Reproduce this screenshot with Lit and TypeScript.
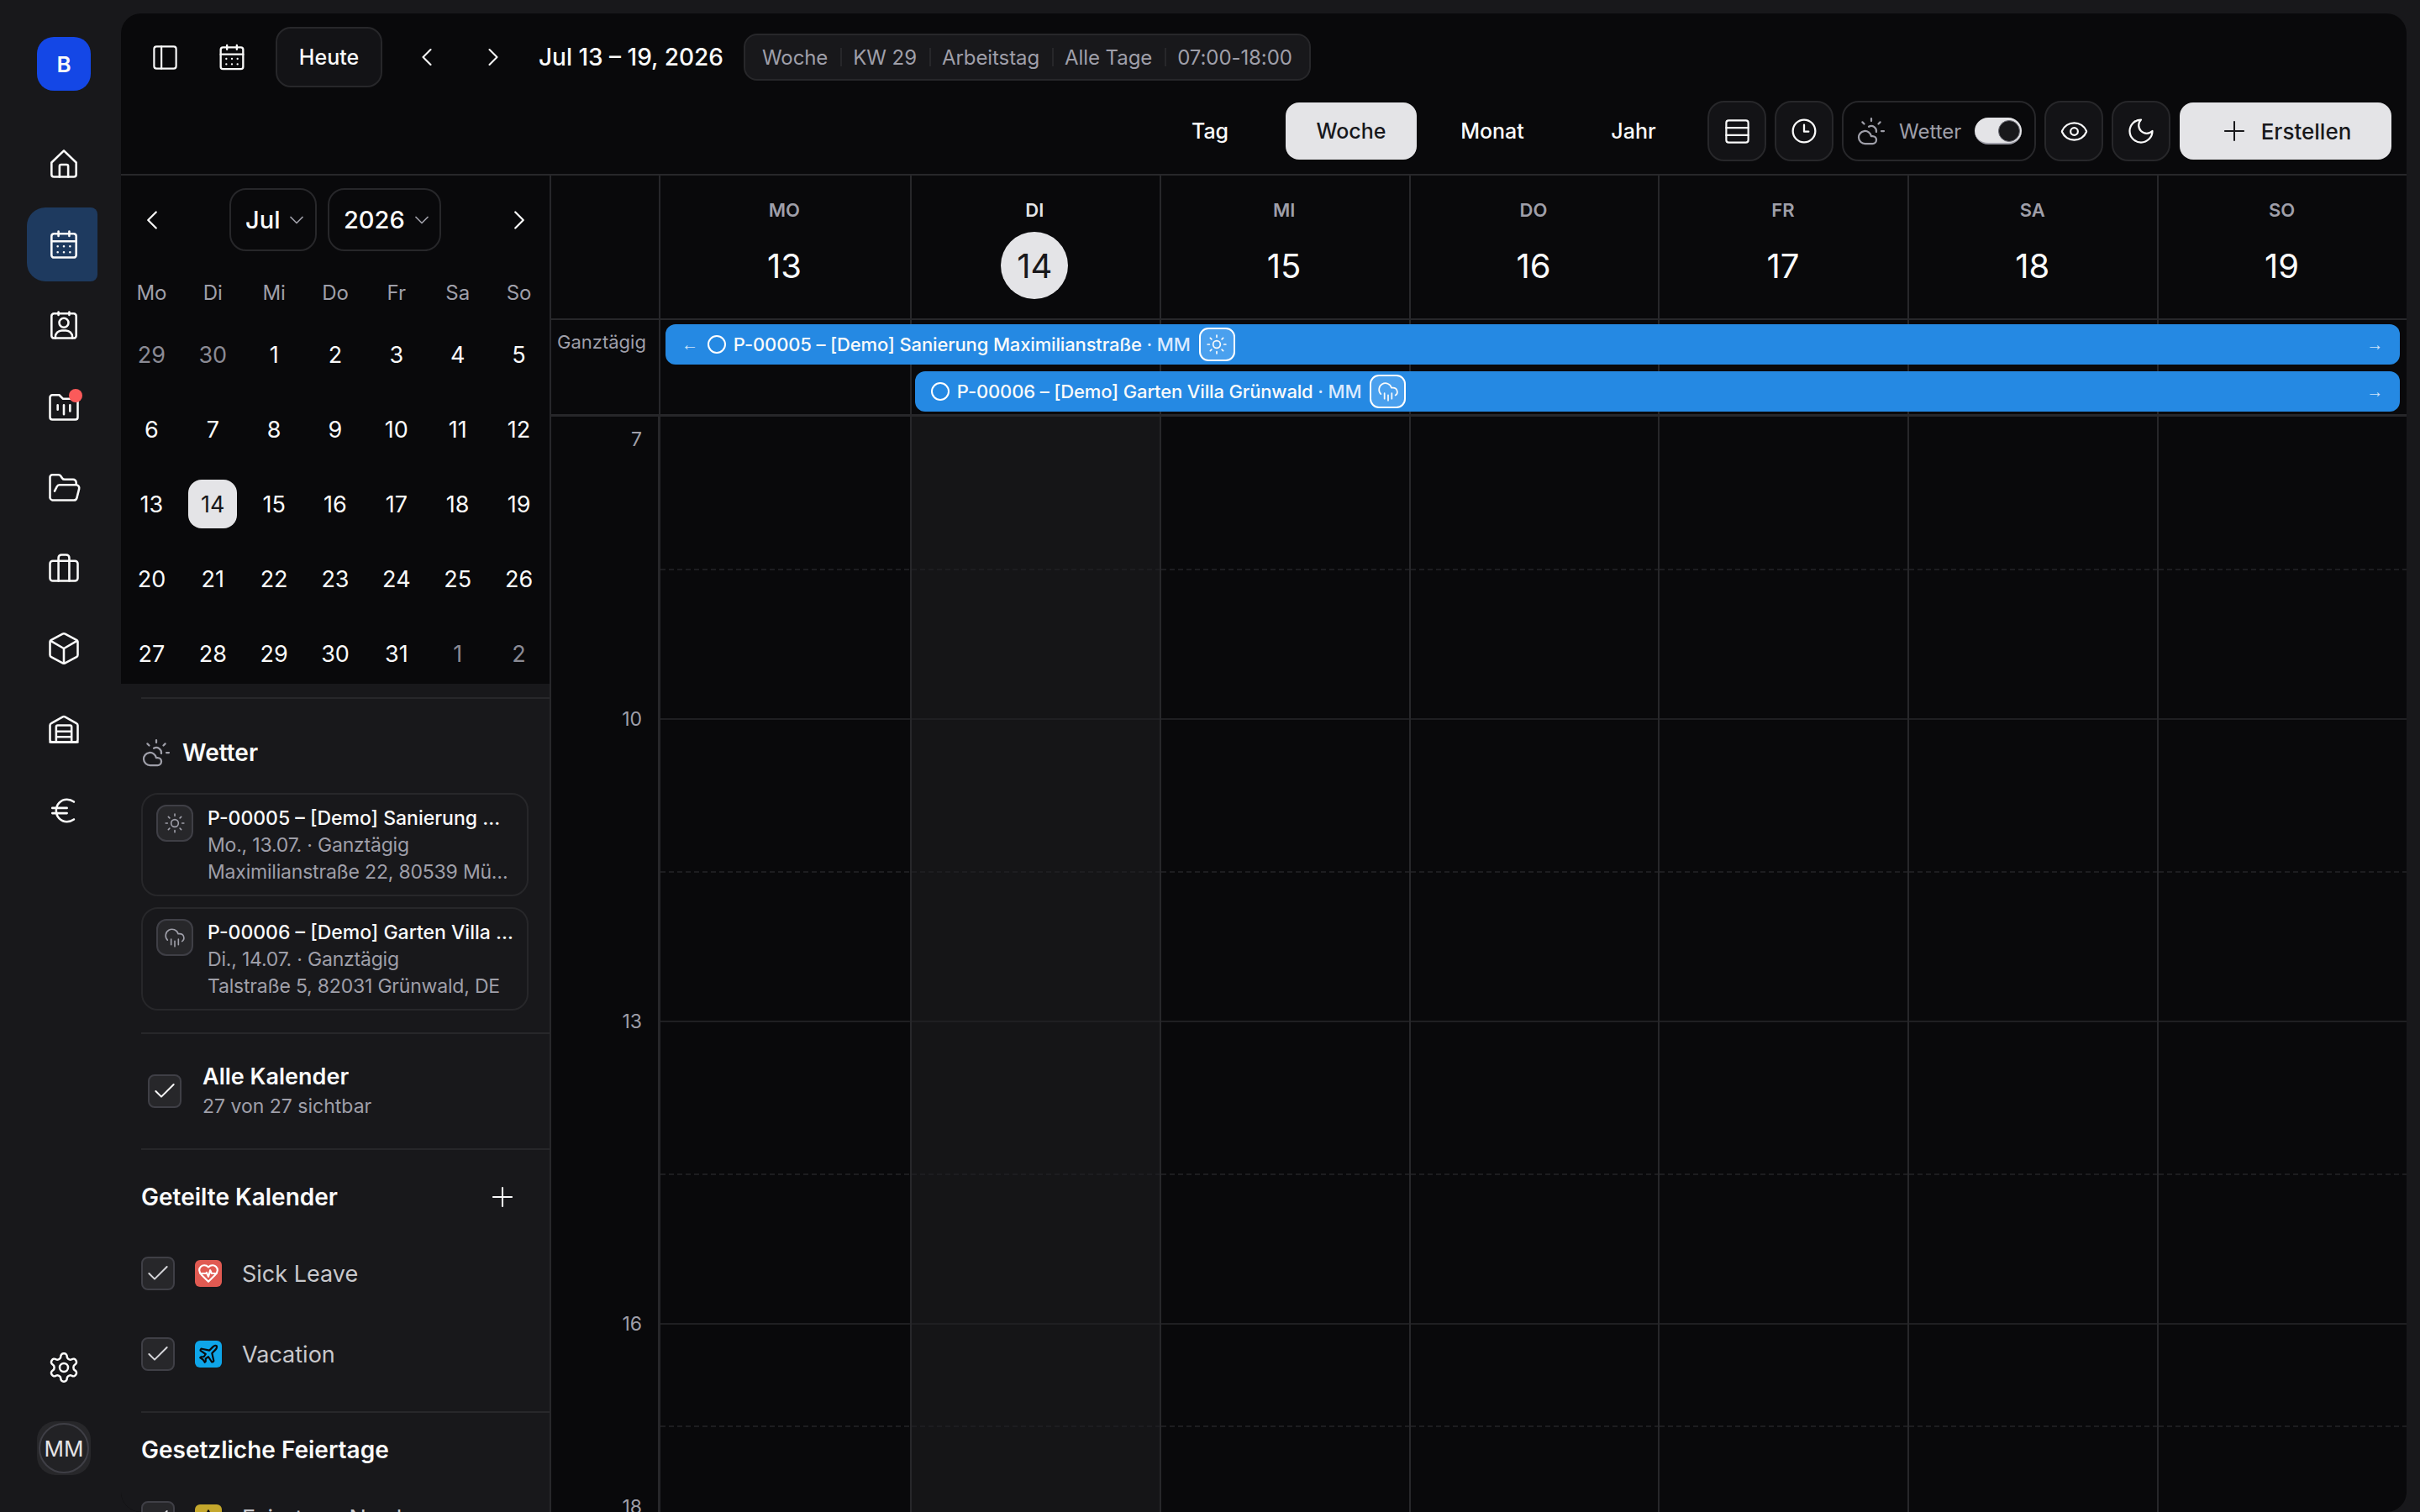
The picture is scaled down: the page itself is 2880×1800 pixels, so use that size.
import { LitElement, html, css, svg } from "lit";
import { customElement } from "lit/decorators.js";

const ICONS: Record<string, unknown> = {
  home: svg`<path d="M4 11.2 12 3.5l8 7.7V19a1.5 1.5 0 0 1-1.5 1.5h-13A1.5 1.5 0 0 1 4 19Z"/><path d="M9.2 20.5V13.5a1 1 0 0 1 1-1h3.6a1 1 0 0 1 1 1v7"/>`,
  calendar: svg`<rect x="4" y="5" width="16" height="15.5" rx="1.6"/><path d="M4 10h16M8.5 3.500v3M15.5 3.500v3"/><path d="M8 13.2h.01M12 13.2h.01M16 13.2h.01M8 17h.01M12 17h.01M16 17h.01"/>`,
  contact: svg`<rect x="4" y="4.5" width="16" height="16" rx="1.6"/><path d="M8.5 3.500v2M15.5 3.500v2"/><circle cx="12" cy="10.5" r="3"/><path d="M6.5 20.5v-.8a4.2 4.2 0 0 1 4.2-4.2h2.6a4.2 4.2 0 0 1 4.2 4.2v.8"/>`,
  report: svg`<path d="M3 6a1.5 1.5 0 0 1 1.5-1.5H9l2.5 2.5h8A1.5 1.5 0 0 1 21 8.500V19a1.500 1.500 0 0 1-1.500 1.500h-15A1.500 1.500 0 0 1 3 19Z"/><path d="M8 11v3M12 11v6M16 11v4"/>`,
  folder: svg`<path d="M6 14.500 7.500 11.600A2 2 0 0 1 9.200 10.500H20a2 2 0 0 1 1.900 2.500l-1.500 6a2 2 0 0 1-1.900 1.500H4.500A2 2 0 0 1 3 19V5.500A1.500 1.500 0 0 1 4.500 4h3.900a2 2 0 0 1 1.700.900l.800 1.200a2 2 0 0 0 1.700.900H18a2 2 0 0 1 2 2v1.500"/>`,
  briefcase: svg`<rect x="3" y="7.500" width="18" height="13" rx="1.800"/><path d="M8.500 7.500V20.500M15.500 7.500V20.500M8.500 7.500V5.500a2 2 0 0 1 2-2h3a2 2 0 0 1 2 2v2"/>`,
  box: svg`<path d="M21 16.200V7.800a1.500 1.500 0 0 0-.8-1.300l-7.400-4a1.700 1.700 0 0 0-1.600 0l-7.400 4a1.500 1.500 0 0 0-.8 1.300v8.400a1.500 1.500 0 0 0 .8 1.300l7.400 4a1.700 1.700 0 0 0 1.600 0l7.400-4a1.500 1.500 0 0 0 .8-1.300Z"/><path d="M3.400 7 12 12l8.600-5M12 12v9.500"/>`,
  warehouse: svg`<path d="M3 9.500a1.500 1.500 0 0 1 .8-1.300l7.500-4.200a1.500 1.500 0 0 1 1.400 0l7.500 4.200a1.500 1.500 0 0 1 .8 1.300V19a1.500 1.500 0 0 1-1.500 1.500h-15A1.500 1.500 0 0 1 3 19Z"/><path d="M7 20.500V10.500a1 1 0 0 1 1-1h8a1 1 0 0 1 1 1v10M7 13.500h10M7 17h10M3 20.500h18"/>`,
  euro: svg`<path d="M18.500 6.300a8 8 0 0 0-4.500-1.500c-4 0-7 3.200-7 7.200s3 7.200 7 7.200a8 8 0 0 0 4.500-1.500M4.500 10.300h9.500M4.500 13.700h9.500"/>`,
  settings: svg`<path d="M12.220 2h-.44a2 2 0 0 0-2 2v.18a2 2 0 0 1-1 1.730l-.43.250a2 2 0 0 1-2 0l-.15-.08a2 2 0 0 0-2.730.730l-.22.380a2 2 0 0 0 .730 2.730l.15.100a2 2 0 0 1 1 1.720v.510a2 2 0 0 1-1 1.740l-.15.090a2 2 0 0 0-.730 2.730l.22.380a2 2 0 0 0 2.730.730l.15-.08a2 2 0 0 1 2 0l.43.250a2 2 0 0 1 1 1.730V20a2 2 0 0 0 2 2h.44a2 2 0 0 0 2-2v-.18a2 2 0 0 1 1-1.730l.43-.250a2 2 0 0 1 2 0l.15.08a2 2 0 0 0 2.730-.730l.22-.390a2 2 0 0 0-.730-2.730l-.15-.08a2 2 0 0 1-1-1.740v-.5a2 2 0 0 1 1-1.740l.15-.090a2 2 0 0 0 .730-2.730l-.22-.380a2 2 0 0 0-2.730-.730l-.15.08a2 2 0 0 1-2 0l-.43-.250a2 2 0 0 1-1-1.730V4a2 2 0 0 0-2-2z"/><circle cx="12" cy="12" r="3"/>`,
  panel: svg`<rect x="3" y="3" width="18" height="18" rx="2"/><path d="M9 3v18"/>`,
  left: svg`<path d="m15 18-6-6 6-6"/>`,
  right: svg`<path d="m9 18 6-6-6-6"/>`,
  down: svg`<path d="m6 9 6 6 6-6"/>`,
  plus: svg`<path d="M5 12h14M12 5v14"/>`,
  check: svg`<path d="M20 6 9 17l-5-5"/>`,
  rows: svg`<rect x="3" y="3" width="18" height="18" rx="2"/><path d="M3 9h18M3 15h18"/>`,
  clock: svg`<circle cx="12" cy="12" r="10"/><path d="M12 6.500V12.500h4"/>`,
  eye: svg`<path d="M2.062 12.348a1 1 0 0 1 0-.696 10.750 10.750 0 0 1 19.876 0 1 1 0 0 1 0 .696 10.750 10.750 0 0 1-19.876 0"/><circle cx="12" cy="12" r="3"/>`,
  moon: svg`<path d="M12 3a6 6 0 0 0 9 9 9 9 0 1 1-9-9Z"/>`,
  cloudSun: svg`<path d="M12 2v2M4.930 4.930l1.410 1.410M20 12h2M19.070 4.930l-1.410 1.410M15.947 12.650a4 4 0 0 0-5.925-4.128M13 22H7a5 5 0 1 1 4.900-6H13a3 3 0 0 1 0 6Z"/>`,
  sun: svg`<circle cx="12" cy="12" r="4"/><path d="M12 2v2M12 20v2M4.930 4.930l1.410 1.410M17.660 17.660l1.410 1.410M2 12h2M20 12h2M6.340 17.660l-1.410 1.410M19.070 4.930l-1.410 1.410"/>`,
  rain: svg`<path d="M4 14.899A7 7 0 1 1 15.710 8h1.790a4.500 4.500 0 0 1 2.500 8.242M16 14v6M8 14v6M12 16v6"/>`,
  heart: svg`<path d="M19 14c1.490-1.460 3-3.210 3-5.500A5.500 5.500 0 0 0 16.500 3c-1.760 0-3 .5-4.500 2-1.500-1.500-2.740-2-4.500-2A5.500 5.500 0 0 0 2 8.500c0 2.300 1.500 4.050 3 5.500l7 7Z"/><path d="M3.220 12H9.500l.5-1 2 4.500 2-7 1.500 3.500h5.270"/>`,
  plane: svg`<path d="M17.800 19.200 16 11l3.500-3.500C21 6 21.500 4 21 3c-1-.5-3 0-4.500 1.500L13 8 4.800 6.200c-.5-.1-.9.1-1.100.5l-.3.5c-.2.5-.1 1 .3 1.300L9 12l-2 3H4l-1 1 3 2 2 3 1-1v-3l3-2 3.500 5.300c.3.4.8.5 1.300.3l.5-.2c.4-.3.6-.7.5-1.200z"/>`,
  peak: svg`<path d="M12 4 5 20h14Z"/>`,
};

const icon = (name: string, size: number, stroke = 2) => html`<svg
  class="icon"
  width=${size}
  height=${size}
  viewBox="0 0 24 24"
  fill="none"
  stroke="currentColor"
  stroke-width=${stroke}
  stroke-linecap="round"
  stroke-linejoin="round"
>${ICONS[name]}</svg>`;

const NAV = ["home", "calendar", "contact", "report", "folder", "briefcase", "box", "warehouse", "euro"];
const WEEK = [
  ["MO", "13"],
  ["DI", "14"],
  ["MI", "15"],
  ["DO", "16"],
  ["FR", "17"],
  ["SA", "18"],
  ["SO", "19"],
];
const MINI_HEAD = ["Mo", "Di", "Mi", "Do", "Fr", "Sa", "So"];
const MINI_DAYS = [29, 30, ...Array.from({ length: 31 }, (_, i) => i + 1), 1, 2];
// half hour blocks of the grid, the last visible block is shorter
const SLOTS = [
  [183, 178],
  [182, 178],
  [182, 178],
  [122, 118],
];
const HOURS = [
  ["7", 12],
  ["10", 303],
  ["13", 330],
  ["16", 330],
  ["18", 188],
];
const FILTERS = ["Woche", "KW 29", "Arbeitstag", "Alle Tage", "07:00-18:00"];

@customElement("app-root")
export class AppRoot extends LitElement {
  static styles = css`
    :host {
      display: flex;
      height: 100vh;
      overflow: hidden;
      background: #18181b;
      color: #fafafa;
      font-family: Inter, "Liberation Sans", sans-serif;
      font-size: 24px;
    }
    .icon {
      display: block;
      flex: none;
    }

    /* rail */
    .rail {
      width: 144px;
      flex: none;
      display: flex;
      flex-direction: column;
      padding: 44px 0;
      box-sizing: border-box;
    }
    .logo {
      width: 64px;
      height: 64px;
      margin-left: 44px;
      border-radius: 20px;
      background: #1447e6;
      display: flex;
      align-items: center;
      justify-content: center;
      font-size: 26px;
      font-weight: 600;
    }
    .nav {
      margin-top: 43px;
      display: flex;
      flex-direction: column;
      gap: 8.2px;
    }
    .nav-item {
      position: relative;
      width: 80px;
      height: 88px;
      margin-left: 32px;
      padding-left: 4px;
      display: flex;
      align-items: center;
      justify-content: center;
      border-radius: 22px 8px 8px 22px;
    }
    .nav-item.active {
      background: #1e3a5f;
    }
    .dot {
      position: absolute;
      left: 50px;
      top: 23px;
      width: 16px;
      height: 16px;
      border-radius: 50%;
      background: #fb5a5a;
    }
    .rail-foot {
      margin-top: auto;
      padding-left: 8px;
      display: flex;
      flex-direction: column;
      align-items: center;
      gap: 44px;
    }
    .avatar {
      width: 64px;
      height: 64px;
      box-sizing: border-box;
      border-radius: 22px;
      background: #27272a;
      padding: 2px;
      color: #e4e4e7;
      font-size: 26px;
    }
    .avatar div {
      height: 100%;
      box-sizing: border-box;
      border: 2px solid #3f3f46;
      border-radius: 50%;
      background: #222225;
      display: flex;
      align-items: center;
      justify-content: center;
    }

    /* panel */
    .panel {
      flex: 1;
      min-width: 0;
      margin: 16px 16px 0 0;
      border-radius: 24px;
      background: #09090b;
      overflow: hidden;
      display: flex;
      flex-direction: column;
    }
    .toolbar {
      height: 193px;
      flex: none;
      box-sizing: border-box;
      border-bottom: 2px solid #27272a;
      padding: 16px 18px 0 16px;
      display: flex;
      flex-direction: column;
      gap: 16px;
    }
    .bar-top,
    .bar-bottom {
      display: flex;
      align-items: center;
    }
    .bar-bottom {
      justify-content: flex-end;
      gap: 10px;
      height: 72px;
    }
    .plain {
      width: 72px;
      height: 72px;
      display: flex;
      align-items: center;
      justify-content: center;
    }
    .today-btn {
      margin-left: 16px;
      width: 127px;
      height: 72px;
      box-sizing: border-box;
      border: 2px solid #27272a;
      border-radius: 18px;
      background: #131316;
      display: flex;
      align-items: center;
      justify-content: center;
      font-size: 25px;
      font-weight: 500;
    }
    .range {
      margin-left: 18px;
      font-size: 28px;
      font-weight: 500;
      white-space: nowrap;
    }
    .filters {
      margin-left: 24px;
      height: 56px;
      box-sizing: border-box;
      border: 2px solid #27272a;
      border-radius: 16px;
      background: #18181b;
      padding: 0 20px;
      display: flex;
      align-items: center;
      color: #9f9fa9;
      white-space: nowrap;
      letter-spacing: -0.08px;
    }
    .filters span + span {
      margin-left: 15px;
      padding-left: 15px;
      background: linear-gradient(#27272a, #27272a) left center / 2px 22px no-repeat;
    }
    .tab {
      width: 156px;
      height: 68px;
      border-radius: 16px;
      display: flex;
      align-items: center;
      justify-content: center;
      font-size: 25px;
      font-weight: 500;
    }
    .tab.active {
      background: #e4e4e7;
      color: #18181b;
    }
    .tabs {
      display: flex;
      gap: 12px;
    }
    .tool {
      width: 70px;
      height: 72px;
      box-sizing: border-box;
      border: 2px solid #27272a;
      border-radius: 20px;
      background: #131316;
      display: flex;
      align-items: center;
      justify-content: center;
    }
    .weather-tool {
      width: 231px;
      height: 72px;
      box-sizing: border-box;
      border: 2px solid #27272a;
      border-radius: 20px;
      background: #09090b;
      padding: 0 15px 0 15px;
      display: flex;
      align-items: center;
      color: #9f9fa9;
    }
    .weather-tool span {
      margin-left: 15px;
    }
    .toggle {
      margin-left: auto;
      width: 56px;
      height: 32px;
      box-sizing: border-box;
      border-radius: 16px;
      background: #e4e4e7;
      border-bottom: 2px solid #9f9fa9;
      padding: 3px 2px 0 0;
      display: flex;
      justify-content: flex-end;
    }
    .toggle i {
      width: 26px;
      height: 26px;
      box-sizing: border-box;
      border-radius: 50%;
      border: 1px solid #71717a;
      background: #18181b;
    }
    .create {
      width: 252px;
      height: 68px;
      margin-left: 1px;
      box-sizing: border-box;
      padding-right: 2px;
      border-radius: 16px;
      background: #e4e4e7;
      color: #18181b;
      display: flex;
      align-items: center;
      justify-content: center;
      gap: 13px;
      font-size: 26px;
      font-weight: 500;
    }

    .body {
      flex: 1;
      min-height: 0;
      display: flex;
    }

    /* left column */
    .side {
      width: 512px;
      flex: none;
      box-sizing: border-box;
      border-right: 2px solid #27272a;
      background: #18181b;
      overflow: hidden;
    }
    .mini {
      background: #09090b;
      padding: 15px 0 7px;
    }
    .mini-nav {
      display: flex;
      align-items: center;
      height: 75px;
    }
    .mini-arrow {
      width: 73px;
      display: flex;
      justify-content: center;
    }
    .selects {
      flex: 1;
      display: flex;
      justify-content: center;
      gap: 13px;
    }
    .select {
      height: 75px;
      box-sizing: border-box;
      border: 2px solid #27272a;
      border-radius: 20px;
      padding-left: 17px;
      display: flex;
      align-items: center;
      gap: 6px;
      font-size: 29px;
      font-weight: 500;
    }
    .select .icon {
      color: #9f9fa9;
    }
    .mini-head,
    .mini-days {
      display: grid;
      grid-template-columns: repeat(7, 1fr);
      justify-items: center;
    }
    .mini-head {
      margin-top: 31px;
      height: 38px;
      line-height: 38px;
      color: #9f9fa9;
      font-size: 24px;
    }
    .mini-days {
      margin-top: 25px;
      row-gap: 31px;
      font-size: 27px;
    }
    .day {
      width: 58px;
      height: 58px;
      display: flex;
      align-items: center;
      justify-content: center;
    }
    .day.muted {
      color: #8a8a94;
    }
    .day.today {
      background: #e4e4e7;
      color: #18181b;
      border-radius: 16px;
    }
    .sections {
      padding-left: 24px;
      padding-top: 16px;
    }
    .rule {
      height: 2px;
      background: #27272a;
    }
    .wetter-head {
      margin-top: 46px;
      height: 36px;
      display: flex;
      align-items: center;
      gap: 13px;
      font-size: 28px;
      font-weight: 600;
    }
    .wetter-head .icon {
      color: #9f9fa9;
    }
    .cards {
      margin: 30px 25px 26px 0;
      display: flex;
      flex-direction: column;
      gap: 13px;
    }
    .card {
      height: 123px;
      box-sizing: border-box;
      border: 2px solid #27272a;
      border-radius: 20px;
      padding: 12px 15px 0 16px;
      display: flex;
      gap: 17px;
    }
    .card-icon {
      width: 44px;
      height: 44px;
      flex: none;
      box-sizing: border-box;
      border: 2px solid #3f3f46;
      border-radius: 12px;
      background: #27272a;
      color: #9f9fa9;
      display: flex;
      align-items: center;
      justify-content: center;
    }
    .card-text {
      min-width: 0;
      flex: 1;
      line-height: 32px;
      font-size: 23px;
      letter-spacing: -0.2px;
      color: #9f9fa9;
    }
    .card-text div {
      white-space: nowrap;
      overflow: hidden;
      text-overflow: ellipsis;
    }
    .card-text .title {
      color: #fafafa;
      font-weight: 500;
      letter-spacing: 0;
    }
    .all {
      display: flex;
      align-items: center;
      gap: 25px;
      padding: 33px 0 33px 8px;
    }
    .all-title {
      font-size: 27px;
      line-height: 36px;
      font-weight: 600;
    }
    .all-sub {
      line-height: 34px;
      font-size: 23px;
      color: #9f9fa9;
    }
    .box {
      width: 40px;
      height: 40px;
      flex: none;
      box-sizing: border-box;
      border: 2px solid #3f3f46;
      border-radius: 8px;
      background: #27272a;
      color: #d4d4d8;
      display: flex;
      align-items: center;
      justify-content: center;
    }
    .all .box {
      color: #fafafa;
    }
    .group-head {
      height: 36px;
      display: flex;
      align-items: center;
      justify-content: space-between;
      padding-right: 37px;
      font-size: 28px;
      font-weight: 600;
    }
    .shared {
      margin-top: 38px;
    }
    .cal-row {
      height: 40px;
      display: flex;
      align-items: center;
      font-size: 27px;
      color: #c8c8cc;
      white-space: nowrap;
    }
    .cal-icon {
      width: 32px;
      height: 32px;
      flex: none;
      margin: 0 24px;
      border-radius: 6px;
      display: flex;
      align-items: center;
      justify-content: center;
    }
    .rows {
      margin: 53px 0 48px;
      display: flex;
      flex-direction: column;
      gap: 56px;
    }
    .holidays {
      margin-top: 26px;
    }
    .holidays + .cal-row {
      margin-top: 43px;
    }

    /* week grid */
    .week {
      flex: 1;
      min-width: 0;
      display: flex;
      flex-direction: column;
    }
    .cols {
      display: grid;
      grid-template-columns: 130px repeat(7, 1fr);
    }
    .cols > * {
      border-left: 2px solid #27272a;
    }
    .cols > :first-child {
      border-left: 0;
      border-right: 2px solid #27272a;
    }
    .cols > :nth-child(2) {
      border-left: 0;
    }
    .head {
      height: 172px;
      flex: none;
      box-sizing: border-box;
      border-bottom: 2px solid #27272a;
    }
    .head-day {
      padding: 27px 2px 0 0;
      display: flex;
      flex-direction: column;
      align-items: center;
    }
    .head-name {
      height: 28px;
      line-height: 28px;
      font-size: 22px;
      font-weight: 600;
      color: #9f9fa9;
    }
    .head-num {
      margin-top: 12px;
      width: 80px;
      height: 80px;
      border-radius: 50%;
      display: flex;
      align-items: center;
      justify-content: center;
      font-size: 40px;
      font-weight: 400;
    }
    .today .head-name {
      color: #e4e4e7;
    }
    .today .head-num {
      background: #e4e4e7;
      color: #18181b;
    }
    .allday {
      position: relative;
      height: 115px;
      flex: none;
      box-sizing: border-box;
      border-bottom: 3px solid #27272a;
    }
    .allday .cols {
      height: 100%;
    }
    .allday-label {
      padding: 11px 0 0 7px;
      line-height: 30px;
      font-size: 22px;
      color: #9f9fa9;
    }
    .events {
      position: absolute;
      inset: 0;
      display: grid;
      grid-template-columns: 130px repeat(7, 1fr);
      grid-template-rows: 48px 48px;
      row-gap: 8px;
      padding-top: 5px;
    }
    .event {
      min-width: 0;
      margin: 0 8px 0 6px;
      border-radius: 12px;
      background: #2589e3;
      display: flex;
      align-items: center;
      font-size: 22px;
      letter-spacing: -0.15px;
      font-weight: 500;
      white-space: nowrap;
    }
    .event.first {
      grid-column: 2 / -1;
      grid-row: 1;
      padding-left: 19px;
    }
    .event.second {
      grid-column: 3 / -1;
      grid-row: 2;
      padding-left: 19px;
    }
    .arrow {
      font-family: "Liberation Sans", sans-serif;
      font-size: 20px;
      font-weight: 400;
      color: #cfe4f9;
    }
    .event.first > .arrow:first-child {
      margin-right: 11px;
    }
    .event .arrow:last-child {
      margin-left: auto;
      margin-right: 20px;
    }
    .ring {
      width: 22px;
      height: 22px;
      flex: none;
      box-sizing: border-box;
      border: 2px solid #fff;
      border-radius: 50%;
      margin-right: 9px;
    }
    .owner {
      color: #dbeafe;
    }
    .chip {
      width: 43px;
      height: 40px;
      flex: none;
      margin-left: 10px;
      box-sizing: border-box;
      border: 2px solid #fff;
      border-radius: 11px;
      background: #4aa0ee;
      display: flex;
      align-items: center;
      justify-content: center;
    }
    .grid {
      flex: 1;
      min-height: 0;
      overflow: hidden;
      align-items: start;
    }
    .grid > :first-child {
      border-right-width: 3px;
      padding-right: 19px;
      height: 100%;
      display: flex;
      flex-direction: column;
      align-items: flex-end;
      font-size: 23px;
      line-height: 30px;
      color: #9f9fa9;
    }
    .grid > :first-child,
    .grid-day {
      box-sizing: border-box;
      min-height: 1400px;
    }
    .grid-day.today {
      background: #151517;
    }
    .half {
      box-sizing: border-box;
      background: repeating-linear-gradient(90deg, #1d1d20 0 6px, transparent 6px 10px) bottom / 100% 2px no-repeat;
    }
    .half.full {
      background: linear-gradient(#1f1f22, #1f1f22) bottom / 100% 2px no-repeat;
    }
  `;

  renderGrid() {
    return html`<div class="cols grid">
      <div>
        ${HOURS.map(([label, top]) => html`<div style="margin-top:${top}px">${label}</div>`)}
      </div>
      ${WEEK.map(
        (_, i) => html`<div class="grid-day ${i === 1 ? "today" : ""}">
          ${SLOTS.map(
            ([a, b]) => html`<div class="half" style="height:${a}px"></div>
              <div class="half full" style="height:${b}px"></div>`
          )}
        </div>`
      )}
    </div>`;
  }

  renderMini() {
    return html`<div class="mini">
      <div class="mini-nav">
        <div class="mini-arrow">${icon("left", 38, 1.4)}</div>
        <div class="selects">
          <div class="select" style="width:104px">Jul ${icon("down", 28, 1.5)}</div>
          <div class="select" style="width:135px">2026 ${icon("down", 28, 1.5)}</div>
        </div>
        <div class="mini-arrow">${icon("right", 38, 1.4)}</div>
      </div>
      <div class="mini-head">${MINI_HEAD.map((d) => html`<div>${d}</div>`)}</div>
      <div class="mini-days">
        ${MINI_DAYS.map((d, i) => {
          const muted = i < 2 || i > 32;
          const today = i === 15;
          return html`<div class="day ${muted ? "muted" : ""} ${today ? "today" : ""}">${d}</div>`;
        })}
      </div>
    </div>`;
  }

  renderCard(ic: string, title: string, date: string, place: string) {
    return html`<div class="card">
      <div class="card-icon">${icon(ic, 26, 1.5)}</div>
      <div class="card-text">
        <div class="title">${title}</div>
        <div>${date}</div>
        <div>${place}</div>
      </div>
    </div>`;
  }

  calRow(name: string, ic: string, bg: string, fg: string) {
    return html`<div class="cal-row">
      <div class="box">${icon("check", 32, 1.5)}</div>
      <div class="cal-icon" style="background:${bg};color:${fg}">${icon(ic, 26, 2)}</div>
      ${name}
    </div>`;
  }

  render() {
    return html`
      <div class="rail">
        <div class="logo">B</div>
        <div class="nav">
          ${NAV.map(
            (n, i) => html`<div class="nav-item ${i === 1 ? "active" : ""}">
              ${icon(n, 44, 1.4)}${i === 3 ? html`<div class="dot"></div>` : ""}
            </div>`
          )}
        </div>
        <div class="rail-foot">
          ${icon("settings", 40, 1.5)}
          <div class="avatar"><div>MM</div></div>
        </div>
      </div>
      <div class="panel">
        <div class="toolbar">
          <div class="bar-top">
            <div class="plain">${icon("panel", 35, 1.5)}</div>
            <div class="plain" style="margin-left:8px">${icon("calendar", 40, 1.4)}</div>
            <div class="today-btn">Heute</div>
            <div class="plain" style="margin-left:17px">${icon("left", 36, 1.4)}</div>
            <div class="plain" style="margin-left:7px">${icon("right", 36, 1.4)}</div>
            <div class="range">Jul 13 – 19, 2026</div>
            <div class="filters">${FILTERS.map((f) => html`<span>${f}</span>`)}</div>
          </div>
          <div class="bar-bottom">
            <div class="tabs">
              ${["Tag", "Woche", "Monat", "Jahr"].map(
                (t) => html`<div class="tab ${t === "Woche" ? "active" : ""}">${t}</div>`
              )}
            </div>
            <div class="tool">${icon("rows", 35, 1.5)}</div>
            <div class="tool">${icon("clock", 32, 1.7)}</div>
            <div class="weather-tool">
              ${icon("cloudSun", 36, 1.5)}<span>Wetter</span>
              <div class="toggle"><i></i></div>
            </div>
            <div class="tool">${icon("eye", 35, 1.5)}</div>
            <div class="tool">${icon("moon", 36, 1.5)}</div>
            <div class="create">${icon("plus", 38, 1.3)} Erstellen</div>
          </div>
        </div>
        <div class="body">
          <div class="side">
            ${this.renderMini()}
            <div class="sections">
              <div class="rule"></div>
              <div class="wetter-head">${icon("cloudSun", 36, 1.5)} Wetter</div>
              <div class="cards">
                ${this.renderCard("sun", "P-00005 – [Demo] Sanierung Maximilianstraße", "Mo., 13.07. · Ganztägig", "Maximilianstraße 22, 80539 München, DE")}
                ${this.renderCard("rain", "P-00006 – [Demo] Garten Villa Grünwald", "Di., 14.07. · Ganztägig", "Talstraße 5, 82031 Grünwald, DE")}
              </div>
              <div class="rule"></div>
              <div class="all">
                <div class="box">${icon("check", 32, 1.5)}</div>
                <div>
                  <div class="all-title">Alle Kalender</div>
                  <div class="all-sub">27 von 27 sichtbar</div>
                </div>
              </div>
              <div class="rule"></div>
              <div class="group-head shared">Geteilte Kalender ${icon("plus", 38, 1.3)}</div>
              <div class="rows">
                ${this.calRow("Sick Leave", "heart", "#e05a52", "#fff")}
                ${this.calRow("Vacation", "plane", "#0ea5e9", "#09090b")}
              </div>
              <div class="rule"></div>
              <div class="group-head holidays">Gesetzliche Feiertage</div>
              ${this.calRow("Feiertage Nord", "peak", "#c4a72c", "#09090b")}
            </div>
          </div>
          <div class="week">
            <div class="cols head">
              <div></div>
              ${WEEK.map(
                ([name, num], i) => html`<div class="head-day ${i === 1 ? "today" : ""}">
                  <div class="head-name">${name}</div>
                  <div class="head-num">${num}</div>
                </div>`
              )}
            </div>
            <div class="allday">
              <div class="cols">
                <div class="allday-label">Ganztägig</div>
                ${WEEK.map(() => html`<div></div>`)}
              </div>
              <div class="events">
                <div class="event first">
                  <span class="arrow">←</span><span class="ring"></span>
                  <span>P-00005 – [Demo] Sanierung Maximilianstraße <span class="owner">· MM</span></span>
                  <span class="chip">${icon("sun", 26, 1.6)}</span>
                  <span class="arrow">→</span>
                </div>
                <div class="event second">
                  <span class="ring"></span>
                  <span>P-00006 – [Demo] Garten Villa Grünwald <span class="owner">· MM</span></span>
                  <span class="chip">${icon("rain", 26, 1.6)}</span>
                  <span class="arrow">→</span>
                </div>
              </div>
            </div>
            ${this.renderGrid()}
          </div>
        </div>
      </div>
    `;
  }
}
